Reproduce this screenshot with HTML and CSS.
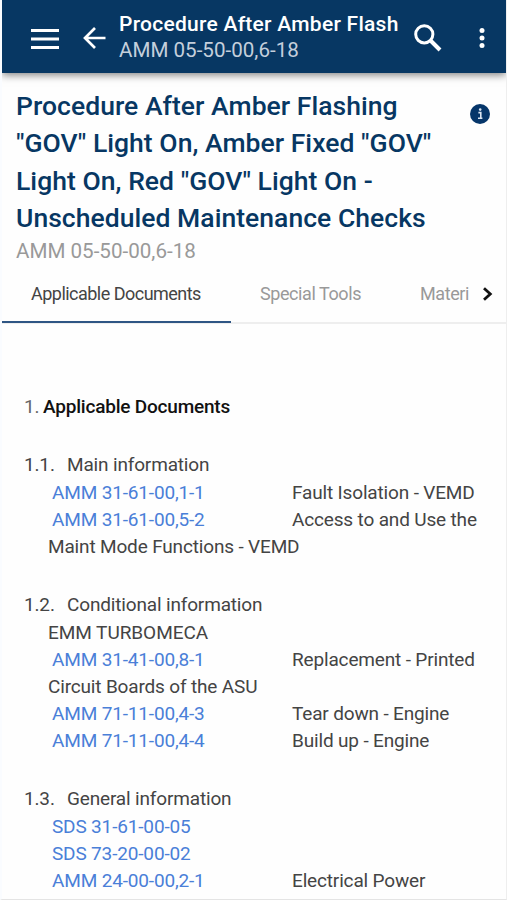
FILE: index.html
```html
<!DOCTYPE html>
<html lang="en">
<head>
<meta charset="utf-8">
<title>Procedure After Amber Flashing</title>
<link rel="stylesheet" href="styles.css">
</head>
<body>
<div class="app">
  <header class="bar">
    <svg class="icon-menu" width="28" height="20" viewBox="0 0 28 20"><path d="M0 1.6h28M0 10h28M0 18.4h28" stroke="#fff" stroke-width="3"/></svg>
    <svg class="icon-back" width="23" height="22" viewBox="0 0 23 22"><path d="M22.5 11H2M12 1L2 11l10 10" fill="none" stroke="#fff" stroke-width="2.7"/></svg>
    <div class="bar-text">
      <div class="bar-title">Procedure After Amber Flash</div>
      <div class="bar-sub">AMM 05-50-00,6-18</div>
    </div>
    <svg class="icon-search" width="28" height="28" viewBox="0 0 28 28"><circle cx="10.3" cy="10.3" r="8.6" fill="none" stroke="#fff" stroke-width="3"/><path d="M16.5 16.5L26 26" stroke="#fff" stroke-width="4"/></svg>
    <svg class="icon-more" width="6" height="20" viewBox="0 0 6 20"><g fill="#fff"><circle cx="3" cy="2.6" r="2.5"/><circle cx="3" cy="10" r="2.5"/><circle cx="3" cy="17.4" r="2.5"/></g></svg>
  </header>
  <section class="heading">
    <div class="heading-text">
      <h1>Procedure After Amber Flashing<br>"GOV" Light On, Amber Fixed "GOV"<br>Light On, Red "GOV" Light On -<br>Unscheduled Maintenance Checks</h1>
      <div class="ref">AMM 05-50-00,6-18</div>
    </div>
    <svg class="icon-info" width="20" height="20" viewBox="0 0 20 20"><circle cx="10" cy="10" r="10" fill="#06366a"/><path d="M8.4 8.6h2.4v5M8 14.3h4.4" fill="none" stroke="#dce6f2" stroke-width="1.6"/><circle cx="10.2" cy="5.6" r="1.3" fill="#dce6f2"/></svg>
  </section>
  <nav class="tabs">
    <div class="tab active">Applicable Documents</div>
    <div class="tab tools">Special Tools</div>
    <div class="tab last">Materi</div>
    <svg class="icon-next" width="11" height="14" viewBox="0 0 11 14"><path d="M2 1.2L8.3 7 2 12.8" fill="none" stroke="#111" stroke-width="2.8"/></svg>
  </nav>
  <main class="doc">
    <h2><span class="n">1.</span> <b>Applicable Documents</b></h2>
    <section>
      <h3><span>1.1.</span>Main information</h3>
      <p class="row"><a>AMM 31-61-00,1-1</a><span>Fault Isolation - VEMD</span></p>
      <p class="row"><a>AMM 31-61-00,5-2</a><span>Access to and Use the</span></p>
      <p>Maint Mode Functions - VEMD</p>
    </section>
    <section>
      <h3><span>1.2.</span>Conditional information</h3>
      <p class="emm">EMM TURBOMECA</p>
      <p class="row"><a>AMM 31-41-00,8-1</a><span>Replacement - Printed</span></p>
      <p>Circuit Boards of the ASU</p>
      <p class="row"><a>AMM 71-11-00,4-3</a><span>Tear down - Engine</span></p>
      <p class="row"><a>AMM 71-11-00,4-4</a><span>Build up - Engine</span></p>
    </section>
    <section>
      <h3><span>1.3.</span>General information</h3>
      <p class="row"><a>SDS 31-61-00-05</a></p>
      <p class="row"><a>SDS 73-20-00-02</a></p>
      <p class="row"><a>AMM 24-00-00,2-1</a><span>Electrical Power</span></p>
    </section>
  </main>
</div>
</body>
</html>
```
FILE: styles.css
```css
* { box-sizing: border-box; }
body { margin: 0; background: #fefefe; font-family: Roboto, "Liberation Sans", sans-serif; color: #444; }
h1, h2, h3, p { margin: 0; font-weight: 400; }
svg { display: block; flex: none; }
.app { width: 507px; height: 900px; overflow: hidden; display: flex; flex-direction: column; border-left: 2px solid #fafcff; border-right: 1px solid #eee; border-bottom: 1px solid #e4e4e4; white-space: nowrap; }
.bar { height: 73px; flex: none; background: #073763; box-shadow: 0 2px 8px rgba(0,0,0,.5); display: flex; align-items: center; padding: 0 21px 0 29px; color: #fff; }
.icon-menu { margin-top: 4px; }
.icon-back { margin: 3px 0 0 24px; }
.bar-text { margin-left: 13px; width: 281px; }
.bar-title { font-size: 21px; line-height: 26px; font-weight: 500; letter-spacing: .26px; }
.bar-sub { font-size: 20.6px; line-height: 26px; color: #c4cfdc; }
.icon-search { margin: 3px 0 0 14px; }
.icon-more { margin: 3px 0 0 auto; }
.heading { height: 191px; flex: none; display: flex; justify-content: space-between; padding: 14px 16px 0 14px; }
h1 { font-size: 26.5px; line-height: 37.3px; font-weight: 500; color: #073763; letter-spacing: .04px; }
.ref { font-size: 20.6px; line-height: 28px; color: #999; margin-top: 1px; }
.icon-info { margin-top: 17px; }
.tabs { height: 60px; flex: none; display: flex; align-items: center; border-bottom: 2px solid #eee; font-size: 18px; color: #999; }
.tab { height: 60px; line-height: 61px; padding-left: 29px; flex: none; letter-spacing: -.42px; }
.active { width: 229px; color: #444; border-bottom: 2px solid #2f5684; letter-spacing: -.52px; }
.tools { width: 159px; }
.tab.last { margin-left: 30px; width: 49px; padding-left: 0; letter-spacing: -.4px; }
.icon-next { margin: 2px 0 0 13px; }
.doc { padding: 69px 0 0 46px; font-size: 19px; line-height: 27.2px; letter-spacing: -.16px; }
h2, h3 { font-size: 19px; line-height: 27.2px; margin-left: -24px; }
h2 b { color: #111; font-weight: 500; letter-spacing: -.2px; margin-left: -1px; }
h2 .n { color: #666; }
h3 { line-height: 28px; }
h3 span { display: inline-block; width: 43px; }
.emm { letter-spacing: -.05px; }
.doc section { margin-top: 30.4px; }
.row { display: flex; padding-left: 4px; }
.row a { width: 240px; flex: none; color: #4a7fd8; letter-spacing: -.16px; }
```
